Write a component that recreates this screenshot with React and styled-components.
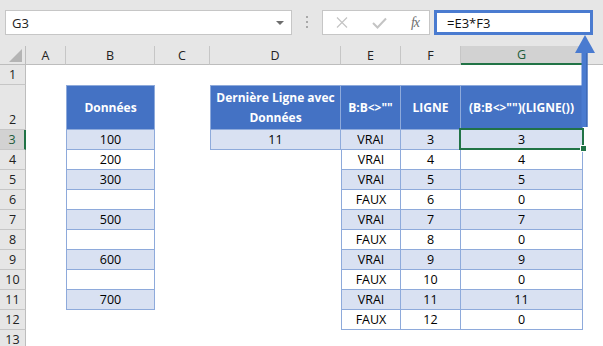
import React from 'react';
import styled, { createGlobalStyle, css } from 'styled-components';

const GlobalStyle = createGlobalStyle`
  html, body {
    margin: 0;
    padding: 0;
    background: #e6e6e6;
    overflow: hidden;
  }
  body {
    font-family: "Open Sans", "Noto Sans", sans-serif;
  }
`;

const Page = styled.div`
  position: relative;
  width: 603px;
  height: 346px;
  overflow: hidden;
  background: #e6e6e6;
`;

/* ---------- formula bar ---------- */

const TopBar = styled.div`
  display: flex;
  align-items: flex-start;
  height: 46px;
  padding: 10px 0 0 5px;
  box-sizing: border-box;
`;

const NameBox = styled.div`
  display: flex;
  align-items: center;
  justify-content: space-between;
  width: 287px;
  height: 25px;
  box-sizing: border-box;
  padding: 0 7px 0 6px;
  background: #fff;
  border: 1px solid #c6c6c6;
  font-size: 13px;
  color: #222;
`;

const Caret = styled.span`
  width: 0;
  height: 0;
  border-left: 4px solid transparent;
  border-right: 4px solid transparent;
  border-top: 4px solid #6d6d6d;
`;

const Grip = styled.div`
  display: flex;
  flex-direction: column;
  gap: 3px;
  margin: 6px 14px 0 14px;

  span {
    width: 2px;
    height: 2px;
    background: #a8a8a8;
  }
`;

const FxButtons = styled.div`
  display: flex;
  align-items: center;
  justify-content: space-between;
  width: 108px;
  height: 25px;
  box-sizing: border-box;
  padding: 0 10px 0 13px;
  background: #fff;
  border: 1px solid #c6c6c6;
`;

const FxLabel = styled.span`
  font-family: "Liberation Serif", "DejaVu Serif", serif;
  font-style: italic;
  font-size: 14px;
  color: #6f6f6f;
  letter-spacing: -1px;
`;

const FormulaInput = styled.div`
  display: flex;
  align-items: center;
  width: 159px;
  height: 25px;
  margin-left: 4px;
  box-sizing: border-box;
  padding-left: 10px;
  background: #fff;
  border: 3px solid #4a7bd0;
  font-size: 13px;
  color: #111;
`;

/* ---------- sheet ---------- */

const COLS = [
  { key: 'A', w: 40 },
  { key: 'B', w: 89 },
  { key: 'C', w: 55 },
  { key: 'D', w: 131 },
  { key: 'E', w: 60 },
  { key: 'F', w: 60 },
  { key: 'G', w: 122 },
  { key: 'H', w: 64, hidden: true },
];

const ROW_H = { 2: 45 };

const Sheet = styled.div`
  display: grid;
  grid-template-columns: 26px ${COLS.map((c) => `${c.w}px`).join(' ')};
  grid-template-rows: 19px ${Array.from({ length: 13 }, (_, i) => `${ROW_H[i + 1] || 20}px`).join(' ')};
  background: #fff;
  font-size: 12.5px;
  color: #000;
`;

const Corner = styled.div`
  position: relative;
  background: #e6e6e6;
  border-right: 1px solid #bdbdbd;
  border-bottom: 1px solid #bdbdbd;

  &::after {
    content: '';
    position: absolute;
    right: 3px;
    bottom: 2px;
    width: 0;
    height: 0;
    border-left: 13px solid transparent;
    border-bottom: 13px solid #b4b4b4;
  }
`;

const ColHead = styled.div`
  display: flex;
  align-items: center;
  justify-content: center;
  box-sizing: border-box;
  background: ${(p) => (p.$active ? '#d2d2d2' : '#e6e6e6')};
  border-right: 1px solid #c6c6c6;
  border-bottom: ${(p) => (p.$active ? '2px solid #217346' : '1px solid #bdbdbd')};
  color: ${(p) => (p.$active ? '#1e5c3a' : '#222')};
  font-size: 12.5px;
`;

const RowHead = styled.div`
  display: flex;
  align-items: flex-end;
  justify-content: center;
  box-sizing: border-box;
  padding-bottom: 1px;
  background: ${(p) => (p.$active ? '#d2d2d2' : '#e6e6e6')};
  border-right: ${(p) => (p.$active ? '2px solid #217346' : '1px solid #bdbdbd')};
  border-bottom: 1px solid #c6c6c6;
  color: ${(p) => (p.$active ? '#1e5c3a' : '#222')};
  font-size: 12.5px;
`;

const Cell = styled.div`
  position: relative;
  display: flex;
  align-items: center;
  justify-content: center;
  text-align: center;
  box-sizing: border-box;
  line-height: 20px;

  ${(p) => p.$kind && css`
    border-right: 1px solid #8eaadb;
    border-bottom: 1px solid #8eaadb;
  `}
  ${(p) => p.$left && css`border-left: 1px solid #8eaadb;`}
  ${(p) => p.$top && css`border-top: 1px solid #8eaadb;`}

  ${(p) => p.$kind === 'head' && css`
    background: #4472c4;
    color: #fff;
    font-weight: 700;
    font-size: 12px;
    padding: 0 3px;
  `}
  ${(p) => p.$kind === 'band' && css`background: #d9e1f2;`}
  ${(p) => p.$kind === 'plain' && css`background: #fff;`}
`;

const Selection = styled.div`
  position: absolute;
  top: -2px;
  left: -2px;
  right: -2px;
  bottom: -1px;
  border: 2px solid #217346;
  pointer-events: none;
  z-index: 2;
`;

const FillHandle = styled.div`
  position: absolute;
  right: -5px;
  bottom: -4px;
  width: 5px;
  height: 5px;
  background: #217346;
  border: 1px solid #fff;
`;

const ArrowMark = styled.svg`
  position: absolute;
  left: 574px;
  top: 34px;
  z-index: 3;
`;

/* ---------- data ---------- */

const B_VALUES = ['100', '200', '300', '', '500', '', '600', '', '700'];
const E_ROWS = [3, 4, 5, 6, 7, 8, 9, 10, 11, 12];
const HAS_DATA = [true, true, true, false, true, false, true, false, true, false];

function cellFor(row, col) {
  if (row === 2) {
    const heads = {
      B: 'Données',
      D: 'Dernière Ligne avec Données',
      E: 'B:B<>""',
      F: 'LIGNE',
      G: '(B:B<>"")(LIGNE())',
    };
    if (heads[col]) return { kind: 'head', text: heads[col], top: true, left: col === 'B' || col === 'D' };
    return null;
  }
  const band = row % 2 === 1 ? 'band' : 'plain';
  if (col === 'B' && row >= 3 && row <= 11) {
    return { kind: band, text: B_VALUES[row - 3], left: true };
  }
  if (col === 'D' && row === 3) return { kind: 'band', text: '11', left: true };
  if (['E', 'F', 'G'].includes(col) && E_ROWS.includes(row)) {
    const i = row - 3;
    const text = col === 'E' ? (HAS_DATA[i] ? 'VRAI' : 'FAUX') : col === 'F' ? String(row) : HAS_DATA[i] ? String(row) : '0';
    return { kind: band, text, left: col === 'E' && row > 3 };
  }
  return null;
}

const XIcon = () => (
  <svg width="12" height="11" viewBox="0 0 12 11">
    <path d="M1 0.5 L11 10.5 M11 0.5 L1 10.5" stroke="#c4c4c4" strokeWidth="1.2" fill="none" />
  </svg>
);

const CheckIcon = () => (
  <svg width="15" height="12" viewBox="0 0 15 12">
    <path d="M1 6 L5.5 10.5 L14 1.5" stroke="#c4c4c4" strokeWidth="2" fill="none" />
  </svg>
);

export default function App() {
  const rows = Array.from({ length: 13 }, (_, i) => i + 1);

  return (
    <Page>
      <GlobalStyle />
      <TopBar>
        <NameBox>
          G3
          <Caret />
        </NameBox>
        <Grip>
          <span />
          <span />
          <span />
        </Grip>
        <FxButtons>
          <XIcon />
          <CheckIcon />
          <FxLabel>fx</FxLabel>
        </FxButtons>
        <FormulaInput>=E3*F3</FormulaInput>
      </TopBar>

      <Sheet>
        <Corner />
        {COLS.map((c) => (
          <ColHead key={c.key} $active={c.key === 'G'}>
            {c.hidden ? null : c.key}
          </ColHead>
        ))}
        {rows.map((r) => (
          <React.Fragment key={r}>
            <RowHead $active={r === 3}>{r}</RowHead>
            {COLS.map((c) => {
              const cell = cellFor(r, c.key);
              const selected = r === 3 && c.key === 'G';
              return (
                <Cell key={c.key} $kind={cell?.kind} $left={cell?.left} $top={cell?.top}>
                  {cell?.text}
                  {selected && (
                    <Selection>
                      <FillHandle />
                    </Selection>
                  )}
                </Cell>
              );
            })}
          </React.Fragment>
        ))}
      </Sheet>

      <ArrowMark width="22" height="95" viewBox="0 0 22 95">
        <rect x="7.5" y="18" width="6" height="75" fill="#4a7bd0" />
        <rect x="12" y="18" width="1.5" height="75" fill="#3f6bb8" />
        <path d="M11 1 L21 19 L1 19 Z" fill="#4a7bd0" />
      </ArrowMark>
    </Page>
  );
}
